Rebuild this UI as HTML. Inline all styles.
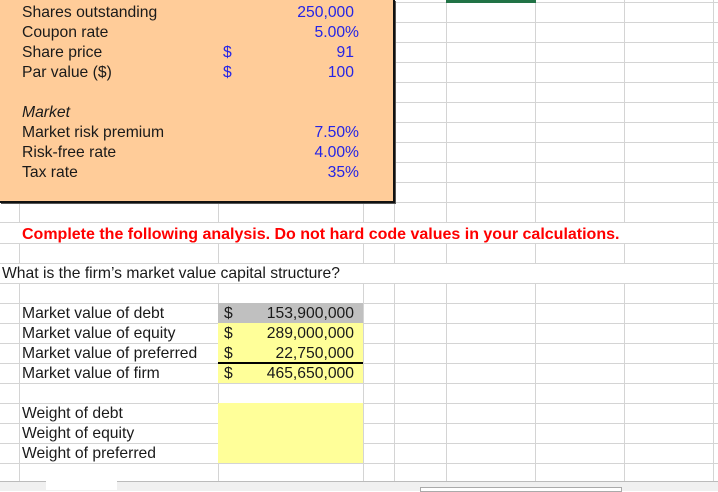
<!DOCTYPE html>
<html><head><meta charset="utf-8"><style>
body{margin:0;width:718px;height:490px;overflow:hidden;background:#fff;font-family:"Liberation Sans",Arial,sans-serif;font-size:15.7px;color:#1a1a1a;position:relative}
.a{position:absolute;white-space:nowrap;line-height:20px;margin-top:1px}
.h{position:absolute;left:0;width:718px;height:1px;background:#d4d4d4}
.v{position:absolute;top:0;width:1px;height:482px;background:#d4d4d4}
.b{color:#2424e6}
.r{text-align:right}
</style></head><body>
<div class="h" style="top:2px"></div>
<div class="h" style="top:22px"></div><div class="h" style="top:42px"></div><div class="h" style="top:62px"></div><div class="h" style="top:82px"></div><div class="h" style="top:102px"></div><div class="h" style="top:122px"></div><div class="h" style="top:142px"></div><div class="h" style="top:162px"></div><div class="h" style="top:182px"></div><div class="h" style="top:202px"></div><div class="h" style="top:222px"></div><div class="h" style="top:243px"></div><div class="h" style="top:263px"></div><div class="h" style="top:283px"></div><div class="h" style="top:303px"></div><div class="h" style="top:323px"></div><div class="h" style="top:343px"></div><div class="h" style="top:363px"></div><div class="h" style="top:383px"></div><div class="h" style="top:403px"></div><div class="h" style="top:423px"></div><div class="h" style="top:443px"></div><div class="h" style="top:463px"></div>
<div class="v" style="left:19px"></div><div class="v" style="left:218px"></div><div class="v" style="left:363px"></div><div class="v" style="left:394px"></div><div class="v" style="left:446px"></div><div class="v" style="left:535px"></div><div class="v" style="left:624px"></div><div class="v" style="left:713px"></div>
<div style="position:absolute;left:0;top:223px;width:712px;height:20px;background:#fff"></div>
<div style="position:absolute;left:0;top:264px;width:712px;height:19px;background:#fff"></div>
<div style="position:absolute;left:446px;top:0;width:90px;height:3px;background:#217346"></div>
<div style="position:absolute;left:0;top:0;width:393px;height:201px;background:#ffcc99;border-right:2px solid #111;border-bottom:2px solid #111;box-shadow:1px 1px 0 #555"></div>
<div class="a" style="left:22px;top:2px">Shares outstanding</div>
<div class="a" style="left:22px;top:22px">Coupon rate</div>
<div class="a" style="left:22px;top:42px">Share price</div>
<div class="a" style="left:22px;top:62px">Par value ($)</div>
<div class="a" style="left:22px;top:102px;font-style:italic">Market</div>
<div class="a" style="left:22px;top:122px">Market risk premium</div>
<div class="a" style="left:22px;top:142px">Risk-free rate</div>
<div class="a" style="left:22px;top:162px">Tax rate</div>
<div class="a b" style="left:223px;top:42px">$</div>
<div class="a b" style="left:223px;top:62px">$</div>
<div class="a b r" style="right:364px;top:2px">250,000</div>
<div class="a b r" style="right:359px;top:22px">5.00%</div>
<div class="a b r" style="right:364px;top:42px">91</div>
<div class="a b r" style="right:364px;top:62px">100</div>
<div class="a b r" style="right:359px;top:122px">7.50%</div>
<div class="a b r" style="right:359px;top:142px">4.00%</div>
<div class="a b r" style="right:359px;top:162px">35%</div>
<div class="a" style="left:22px;top:224px;color:#ff0000;font-weight:bold;font-size:16px">Complete the following analysis. Do not hard code values in your calculations.</div>
<div class="a" style="left:2px;top:263px">What is the firm’s market value capital structure?</div>
<div style="position:absolute;left:218px;top:303px;width:145px;height:20px;background:#c0c0c0"></div>
<div style="position:absolute;left:218px;top:323px;width:145px;height:60px;background:#ffff99"></div>
<div style="position:absolute;left:218px;top:403px;width:145px;height:60px;background:#ffff99"></div>
<div style="position:absolute;left:218px;top:362px;width:145px;height:2px;background:#000"></div>
<div class="a" style="left:22px;top:303px">Market value of debt</div>
<div class="a" style="left:22px;top:323px">Market value of equity</div>
<div class="a" style="left:22px;top:343px">Market value of preferred</div>
<div class="a" style="left:22px;top:363px">Market value of firm</div>
<div class="a" style="left:22px;top:403px">Weight of debt</div>
<div class="a" style="left:22px;top:423px">Weight of equity</div>
<div class="a" style="left:22px;top:443px">Weight of preferred</div>
<div class="a" style="left:224px;top:303px">$</div><div class="a" style="left:224px;top:323px">$</div><div class="a" style="left:224px;top:343px">$</div><div class="a" style="left:224px;top:363px">$</div>
<div class="a r" style="right:364px;top:303px">153,900,000</div>
<div class="a r" style="right:364px;top:323px">289,000,000</div>
<div class="a r" style="right:364px;top:343px">22,750,000</div>
<div class="a r" style="right:364px;top:363px">465,650,000</div>
<div style="position:absolute;left:0;top:481px;width:718px;height:9px;background:#f0f0f0;border-top:1px solid #bbb"></div>
<div style="position:absolute;left:46px;top:481px;width:71px;height:9px;background:#fff"></div>
<div style="position:absolute;left:420px;top:487px;width:200px;height:3px;background:#fff;border:1px solid #aaa"></div>
</body></html>
